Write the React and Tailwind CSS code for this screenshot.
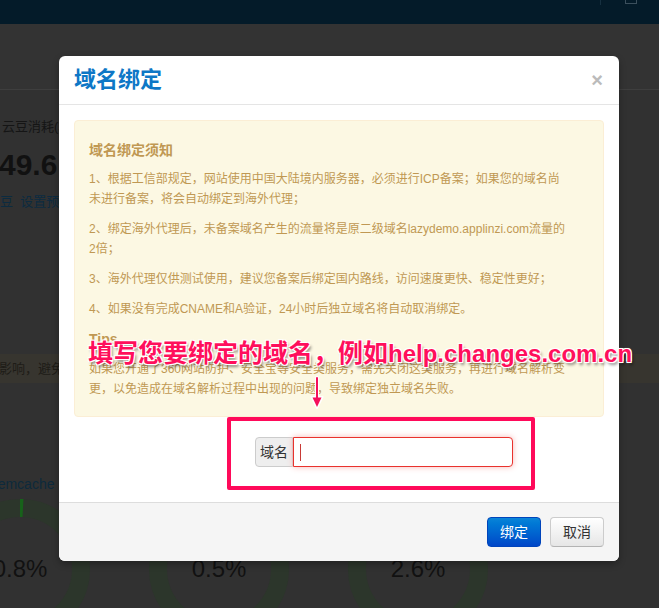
import React from "react";

// Donut gauge drawn behind the modal (already dimmed colours).
const Ring = ({ value, pct }) => {
  const r = 61;
  const c = 2 * Math.PI * r;
  return (
    <div className="grid h-[140px] w-[140px] shrink-0 place-items-center">
      <svg className="[grid-area:1/1]" width="140" height="140" viewBox="0 0 140 140">
        <circle cx="70" cy="70" r={r} fill="none" stroke="#2c362b" strokeWidth="18" />
        <circle
          cx="70"
          cy="70"
          r={r}
          fill="none"
          stroke="#17621a"
          strokeWidth="18"
          strokeDasharray={`${c * pct} ${c}`}
          transform="rotate(-90 70 70)"
        />
      </svg>
      <span className="[grid-area:1/1] text-[24px] leading-none text-[#111]">{value}</span>
    </div>
  );
};

const App = () => {
  return (
    <div className="relative h-[608px] w-[659px] overflow-hidden bg-[#313131] font-['Liberation_Sans','Noto_Sans_CJK_SC',sans-serif]">
      {/* Page behind the backdrop */}
      <div className="flex h-[24px] items-start bg-[#041b29]">
        <div className="ml-[600px] h-[5px] w-px bg-[#163040]" />
        <div className="ml-[24px] h-[4px] w-[12px] border border-t-0 border-[#3b4f5c]" />
      </div>
      <div className="h-[66px] border-b border-[#3e3e3e] bg-[#333]" />

      <div className="flex flex-col">
        <div className="mt-[28px] ml-[2px] whitespace-nowrap text-[13px] leading-[18px] text-[#151515]">云豆消耗(本月)</div>
        <div className="mt-[11px] -ml-px text-[30px] font-bold leading-[36px] text-[#111]">49.6</div>
        <div className="mt-[10px] -ml-[13px] whitespace-nowrap text-[13px] leading-[18px] text-[#0c2b40]">
          云豆&nbsp;&nbsp;设置预警
        </div>
        <div className="mt-[143px] flex h-[29px] items-center bg-[#37352f]">
          <span className="-ml-px whitespace-nowrap text-[13px] text-[#1e1c17]">影响，避免出现</span>
        </div>
        <div className="mt-[92px] -ml-[14px] text-[14px] leading-[18px] text-[#0d2a3c]">memcache</div>
        <div className="mt-[6px] -ml-[50px] flex gap-[59px]">
          <Ring value="0.8%" pct={0.008} />
          <Ring value="0.5%" pct={0.005} />
          <Ring value="2.6%" pct={0.026} />
        </div>
      </div>

      {/* Modal */}
      <div className="absolute left-[59px] top-[56px] w-[560px] rounded-[6px] bg-white shadow-[0_3px_7px_rgba(0,0,0,0.3)]">
        <div className="flex h-[49px] items-center justify-between border-b border-[#e5e5e5] px-[15px]">
          <h3 className="text-[22px] font-bold leading-none text-[#0e77c6]">域名绑定</h3>
          <span className="mr-[1px] text-[20px] font-bold leading-none text-[#bbb]">×</span>
        </div>

        <div className="p-[15px]">
          <div className="rounded-[4px] border border-[#fbeed5] bg-[#fcf8e3] px-[14px] pb-[17px] pt-[19px] text-[12px] leading-[20px] text-[#c09853]">
            <h4 className="mb-[9px] text-[14px] font-bold leading-[20px]">域名绑定须知</h4>
            <p>
              1、根据工信部规定，网站使用中国大陆境内服务器，必须进行ICP备案；如果您的域名尚
              <br />
              未进行备案，将会自动绑定到海外代理；
            </p>
            <p className="mt-[10px]">
              2、绑定海外代理后，未备案域名产生的流量将是原二级域名lazydemo.applinzi.com流量的
              <br />
              2倍；
            </p>
            <p className="mt-[10px]">3、海外代理仅供测试使用，建议您备案后绑定国内路线，访问速度更快、稳定性更好；</p>
            <p className="mt-[10px]">4、如果没有完成CNAME和A验证，24小时后独立域名将自动取消绑定。</p>
            <h4 className="mt-[10px] text-[14px] font-bold leading-[20px]">Tips</h4>
            <p className="mt-[10px]">
              如果您开通了360网站防护、安全宝等安全类服务，需先关闭这类服务，再进行域名解析变
              <br />
              更，以免造成在域名解析过程中出现的问题，导致绑定独立域名失败。
            </p>
          </div>

          <div className="mb-[20px] ml-[181px] mt-[20px] flex h-[30px]">
            <span className="flex w-[38px] items-center justify-center rounded-l-[4px] border border-[#ccc] bg-[#eee] text-[14px] text-[#333]">
              域名
            </span>
            <div className="flex w-[220px] items-center rounded-r-[4px] border border-[#e9322d] bg-white shadow-[0_0_6px_#f8b9b7]">
              <span className="ml-[6px] h-[17px] w-px bg-[#c83a36]" />
            </div>
          </div>
        </div>

        <div className="flex justify-end gap-[9px] rounded-b-[6px] border-t border-[#ddd] bg-[#f5f5f5] px-[15px] py-[14px]">
          <button className="h-[30px] w-[54px] rounded-[4px] border border-[#0044bb] bg-linear-to-b from-[#0a84d8] to-[#0046c8] text-[14px] text-white">
            绑定
          </button>
          <button className="h-[30px] w-[54px] rounded-[4px] border border-[#ccc] border-b-[#b3b3b3] bg-linear-to-b from-white to-[#e6e6e6] text-[14px] text-[#333]">
            取消
          </button>
        </div>

        {/* Annotation frame around the input */}
        <div className="absolute left-[168px] top-[361px] h-[73px] w-[308px] rounded-[2px] border-[4px] border-[#ff0a5a]" />
      </div>

      {/* Annotation callout */}
      <div className="absolute left-[88px] top-[341px] whitespace-nowrap font-bold leading-[25px] text-[#ff0f5c] [text-shadow:0_0_2px_#fff,1px_1px_0_#fff,-1px_-1px_0_#fff,1px_-1px_0_#fff,-1px_1px_0_#fff,2px_3px_3px_rgba(0,0,0,0.45)]">
        <span className="text-[25px]">填写您要绑定的域名，例如</span>
        <span className="text-[24px]">help.changes.com.cn</span>
      </div>
      <svg className="absolute left-[309px] top-[376px]" width="16" height="34" viewBox="0 0 16 34">
        <path d="M8 2 L8 24" stroke="#fff" strokeWidth="4" strokeLinecap="round" />
        <path d="M2.5 21 L13.5 21 L8 32 Z" fill="#fff" stroke="#fff" strokeWidth="2" strokeLinejoin="round" />
        <path d="M8 2 L8 24" stroke="#f5105c" strokeWidth="2" strokeLinecap="round" />
        <path d="M3.5 21.5 L12.5 21.5 L8 31 Z" fill="#f5105c" />
      </svg>
    </div>
  );
};

export default App;
